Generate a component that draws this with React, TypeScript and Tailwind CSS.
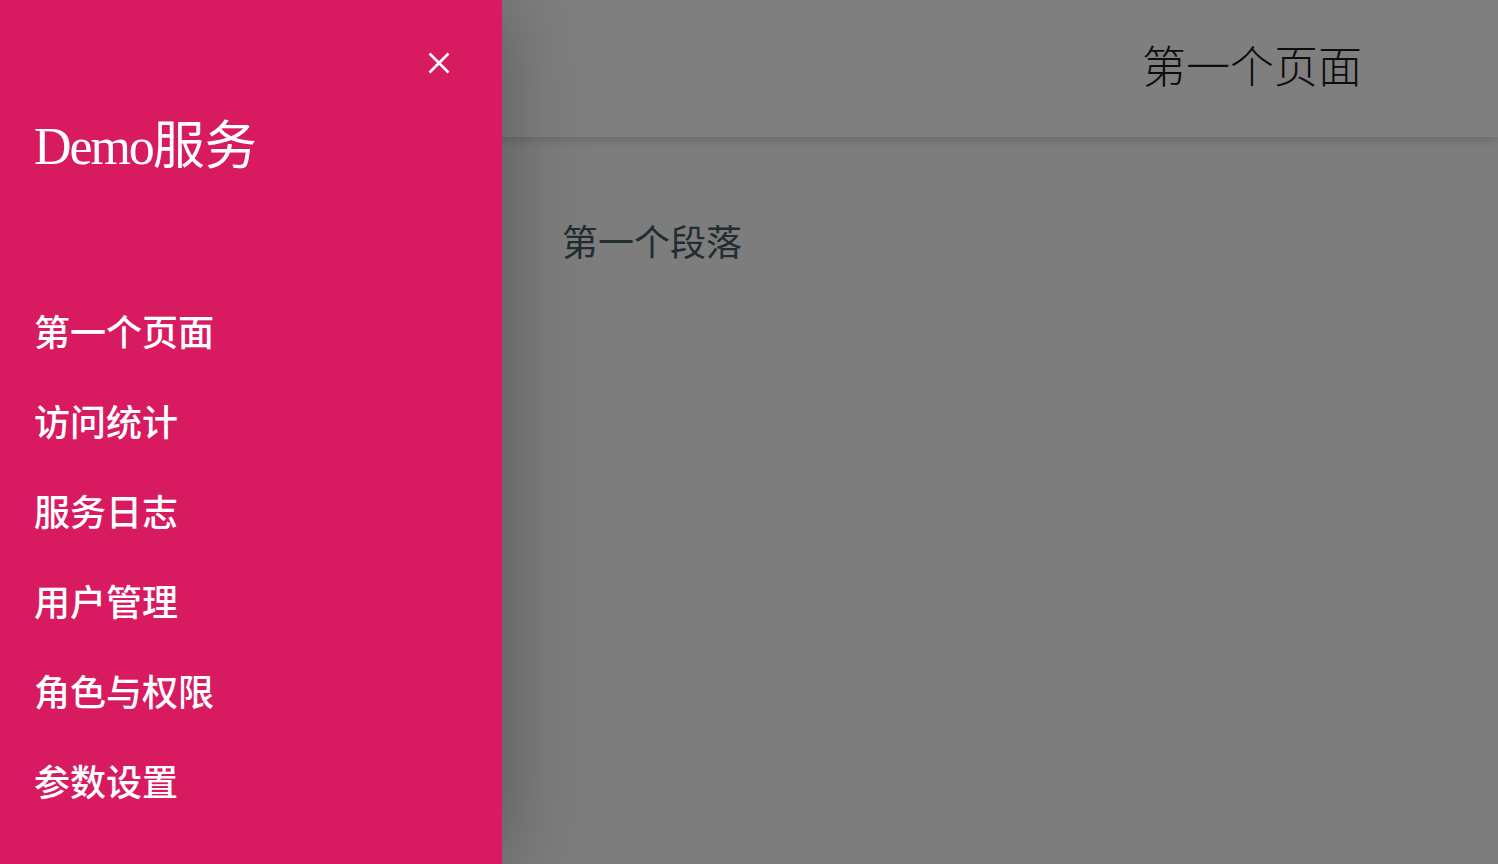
const menu = ["第一个页面", "访问统计", "服务日志", "用户管理", "角色与权限", "参数设置"];

const serif = "font-['Liberation_Serif','Noto_Sans_CJK_SC',serif]";
const sans = "font-['Noto_Sans_CJK_SC','Noto_Sans',sans-serif]";

export default function App() {
  return (
    <div className="relative h-screen w-full overflow-hidden bg-[#fafafa]">
      {/* page underneath */}
      <div className="flex h-full flex-col">
        <header className="flex h-[137px] shrink-0 items-center justify-end bg-white pr-[136px] shadow-[0_2px_10px_rgba(0,0,0,0.18)]">
          <h1 className={`${serif} text-[44px] font-light leading-none text-[#1a1a1a]`}>第一个页面</h1>
        </header>
        <main className="pl-[562px] pt-[76px]">
          <p className={`${sans} text-[36px] leading-[54px] text-[#455a64]`}>第一个段落</p>
        </main>
      </div>

      {/* overlay */}
      <div className="absolute inset-0 bg-black/50" />

      {/* drawer */}
      <aside className="absolute inset-y-0 left-0 flex w-[502px] flex-col bg-[#d81b60] text-white shadow-[0_0_80px_rgba(0,0,0,0.3)]">
        <div className="flex justify-end pr-[52px] pt-[52px]">
          <button className="h-[22px] w-[22px]">
            <svg viewBox="0 0 22 22" className="h-[22px] w-[22px]" fill="none" stroke="white" strokeWidth="2.6">
              <path d="M1.5 1.5 L20.5 20.5 M20.5 1.5 L1.5 20.5" />
            </svg>
          </button>
        </div>
        <div className={`${serif} mt-[42px] pl-[34px] text-[52px] leading-[62px]`}>
          <span className="tracking-[-0.04em]">Demo</span>服务
        </div>
        <nav className="mt-[107px] flex flex-col">
          {menu.map((m) => (
            <a key={m} className={`${sans} flex h-[90px] items-center pl-[34px] text-[36px] font-medium leading-none`}>
              {m}
            </a>
          ))}
        </nav>
      </aside>
    </div>
  );
}
